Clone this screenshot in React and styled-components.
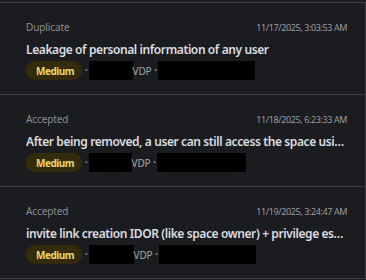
import styled, { createGlobalStyle } from "styled-components"

const Global = createGlobalStyle`
  html, body {
    margin: 0;
    padding: 0;
    background: #1b1c1f;
    font-family: "Noto Sans", "Open Sans", sans-serif;
  }
`

const reports = [
  { status: "Duplicate", date: "11/17/2025, 3:03:53 AM", title: "Leakage of personal information of any user", a: 44, b: 97 },
  { status: "Accepted", date: "11/18/2025, 6:23:33 AM", title: "After being removed, a user can still access the space using an old invite link", a: 43, b: 89 },
  { status: "Accepted", date: "11/19/2025, 3:24:47 AM", title: "invite link creation IDOR (like space owner) + privilege escalation to admin", a: 45, b: 97 },
]

function App() {
  return (
    <>
      <Global />
      <Page>
        <List>
          {reports.map((r, i) => (
            <Item key={i}>
              <Head>
                <Status>{r.status}</Status>
                <Date>{r.date}</Date>
              </Head>
              <Title>{r.title}</Title>
              <Meta>
                <Badge>Medium</Badge>
                <Dot>•</Dot>
                <Redact $w={r.a} />
                <Program>VDP</Program>
                <Dot>•</Dot>
                <Redact $w={r.b} />
              </Meta>
            </Item>
          ))}
        </List>
      </Page>
    </>
  )
}

export default App

const Page = styled.div`
  width: 366px;
  height: 280px;
  padding-top: 2px;
  box-sizing: border-box;
  overflow: hidden;
`

const List = styled.div`
  border-top: 1px solid #3c3e42;
  border-right: 1px solid #3c3e42;
  width: 366px;
  box-sizing: border-box;
`

const Item = styled.div`
  height: 92px;
  box-sizing: border-box;
  padding: 17px 18px 0 26px;
  border-bottom: 1px solid #3c3e42;
`

const Head = styled.div`
  display: flex;
  justify-content: space-between;
  align-items: center;
  height: 14px;
`

const Status = styled.span`
  font-size: 10px;
  letter-spacing: -0.1px;
  color: #8a8d93;
`

const Date = styled.span`
  font-size: 9px;
  letter-spacing: -0.4px;
  color: #9a9ca2;
`

const Title = styled.div`
  margin-top: 7px;
  font-size: 12px;
  line-height: 17px;
  font-weight: 600;
  letter-spacing: -0.4px;
  color: #dcdde0;
  white-space: nowrap;
  overflow: hidden;
  text-overflow: ellipsis;
`

const Meta = styled.div`
  display: flex;
  align-items: center;
  margin-top: 3px;
  height: 19px;
  font-size: 10px;
  color: #8d9096;
`

const Badge = styled.span`
  display: flex;
  align-items: center;
  height: 19px;
  padding: 0 8px 0 10px;
  border-radius: 10px;
  background: #342b0c;
  color: #ead66c;
  font-size: 10px;
  font-weight: 700;
  letter-spacing: -0.5px;
`

const Dot = styled.span`
  font-size: 7px;
  margin: 0 1px 0 3px;
  color: #8d9096;
`

const Redact = styled.span`
  display: block;
  width: ${(p) => p.$w}px;
  height: 19px;
  background: #000;
`

const Program = styled.span`
  font-size: 10px;
  letter-spacing: -0.2px;
  color: #a3a6ab;
`
